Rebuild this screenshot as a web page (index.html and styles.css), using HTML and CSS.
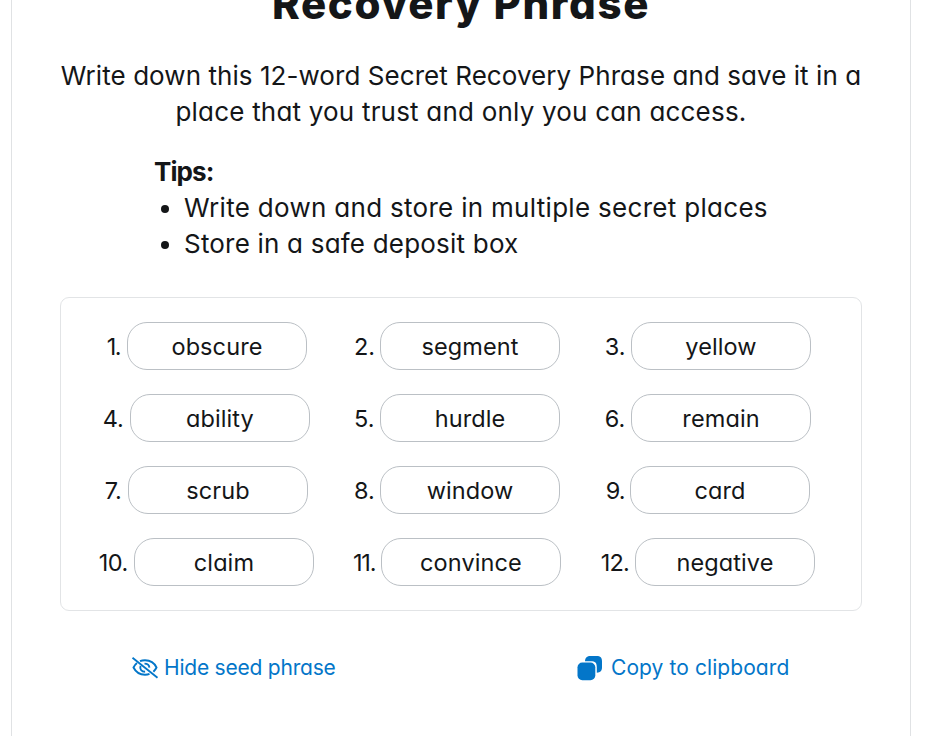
FILE: index.html
```html
<!DOCTYPE html>
<html lang="en">
<head>
<meta charset="utf-8">
<title>Secret Recovery Phrase</title>
<link rel="stylesheet" href="styles.css">
</head>
<body>
<main class="card">
  <h1 class="title">Recovery Phrase</h1>
  <p class="intro"><span class="intro-first">Write down this 12-word Secret Recovery Phrase and save it in a</span><br><span class="intro-second">place that you trust and only you can access.</span></p>
  <section class="tips">
    <h2 class="tips-title">Tips:</h2>
    <ul class="tips-list">
      <li class="tip-write">Write down and store in multiple secret places</li>
      <li class="tip-store">Store in a safe deposit box</li>
    </ul>
  </section>
  <section class="phrase">
    <div class="word"><span class="num n1">1.</span><span class="chip">obscure</span></div>
    <div class="word"><span class="num n2">2.</span><span class="chip">segment</span></div>
    <div class="word"><span class="num n3">3.</span><span class="chip">yellow</span></div>
    <div class="word"><span class="num n4">4.</span><span class="chip">ability</span></div>
    <div class="word"><span class="num n5">5.</span><span class="chip">hurdle</span></div>
    <div class="word"><span class="num n6">6.</span><span class="chip">remain</span></div>
    <div class="word"><span class="num n7">7.</span><span class="chip">scrub</span></div>
    <div class="word"><span class="num n8">8.</span><span class="chip">window</span></div>
    <div class="word"><span class="num n9">9.</span><span class="chip">card</span></div>
    <div class="word"><span class="num n10">10.</span><span class="chip">claim</span></div>
    <div class="word"><span class="num n11">11.</span><span class="chip">convince</span></div>
    <div class="word"><span class="num n12">12.</span><span class="chip">negative</span></div>
  </section>
  <footer class="actions">
    <a class="action hide">
      <svg class="icon-eye" viewBox="0 0 28 24" fill="none" stroke="currentColor" stroke-width="1.900">
        <path d="M1.500 1.800 26.500 21.800"/>
        <path d="M9 5.200C10.500 4.500 12.200 4.200 14 4.200c5.200 0 9.400 2.700 11.500 7.300-.8 1.700-1.800 3-3.100 4.200M18.500 17.900c-1.400.6-2.900.8-4.500.8-5 0-9.200-2.600-11.500-7.200.9-1.800 2-3.200 3.500-4.400"/>
        <path d="M9.600 9.800c-1.200 3.200.8 6 4.500 6M13.500 7.600c2.900 0 4.700 1.500 4.900 4"/>
      </svg>
      <span>Hide seed phrase</span>
    </a>
    <a class="action copy">
      <svg class="icon-copy" viewBox="0 0 26 26" fill="currentColor">
        <path d="M8 6.200C8.300 2.500 10 1 13.500 1h6C23.500 1 25 2.500 25 6.500v5.800c0 3.500-1.500 5.200-5.200 5.500v-5.600c0-4.500-1.600-6-6-6z"/>
        <rect x=".5" y="7.500" width="17.800" height="17.700" rx="4.800"/>
      </svg>
      <span>Copy to clipboard</span>
    </a>
  </footer>
</main>
</body>
</html>
```
FILE: styles.css
```css
* { box-sizing: border-box; }
html { background: #fff; overflow: hidden; }
body {
  margin: 0;
  height: 736px;
  overflow: hidden;
  font-family: Inter, "Open Sans", sans-serif;
  font-feature-settings: "cv11";
  font-size: 26px;
  line-height: 36px;
  color: #141618;
}
.card {
  display: flow-root;
  width: 900px;
  height: 736px;
  margin-left: 11px;
  padding: 0 48px;
  border: solid #e0e2e4;
  border-width: 0 1px;
}
.title {
  margin: -22px 0 24px;
  font-size: 42px;
  font-weight: 800;
  line-height: 52px;
  letter-spacing: 1.65px;
  padding-bottom: 4px;
  text-align: center;
  white-space: nowrap;
}
.intro { margin: 0 0 24px; text-align: center; white-space: nowrap; }
.intro-first { letter-spacing: 0.06px; }
.intro-second { letter-spacing: 0.2px; }
.tips { margin: 0 0 35px 94px; white-space: nowrap; }
.tips-title { margin: 0; font-size: 26px; font-weight: 700; line-height: 36px; letter-spacing: -0.9px; }
.tips-list { margin: 0; padding: 0 0 0 30px; list-style: none; }
.tips-list li { display: flex; align-items: center; }
.tip-write { letter-spacing: 0.3px; }
.tip-store { letter-spacing: 0.2px; }
.tips-list li::before {
  content: "";
  width: 8px;
  height: 8px;
  margin: 2px 15px 0 -23px;
  border-radius: 50%;
  background: currentColor;
}
.phrase {
  display: grid;
  grid-template-columns: repeat(3, 1fr);
  row-gap: 24px;
  width: 802px;
  height: 314px;
  padding: 24px;
  border: 1px solid #e2e4e6;
  border-radius: 9px;
  font-size: 23.5px;
}
.word { display: flex; justify-content: center; align-items: center; height: 48px; padding-right: 8px; }
.num { flex: none; padding-top: 2px; white-space: nowrap; }
.n1 { width: 21.3px; padding-left: 1px; letter-spacing: -1.5px; }
.n4 { width: 27.3px; }
.n7 { width: 23.3px; }
.n10 { width: 35.3px; letter-spacing: -0.5px; }
.n2, .n5, .n8 { width: 26px; }
.n11 { width: 28px; letter-spacing: -1.2px; }
.n3, .n6 { width: 26.7px; padding-left: 0.5px; }
.n9 { width: 24.7px; padding-left: 0.5px; letter-spacing: -1px; }
.n12 { width: 34.7px; padding-left: 0.5px; letter-spacing: -0.9px; }
.chip {
  flex: none;
  width: 180px;
  height: 48px;
  border: 1px solid #bbc0c5;
  border-radius: 20px;
  line-height: 48px;
  letter-spacing: 0.1px;
  text-align: center;
}
.actions { display: grid; grid-template-columns: 1fr 1fr; margin-top: 39px; font-size: 21px; color: #0376c9; }
.action { display: flex; align-items: center; white-space: nowrap; }
.hide { padding-left: 71px; letter-spacing: -0.22px; }
.copy { padding-left: 116px; letter-spacing: 0.08px; }
.icon-eye { width: 28px; height: 24px; margin-right: 5px; }
.icon-copy { width: 26px; height: 26px; margin-right: 8px; }
```
